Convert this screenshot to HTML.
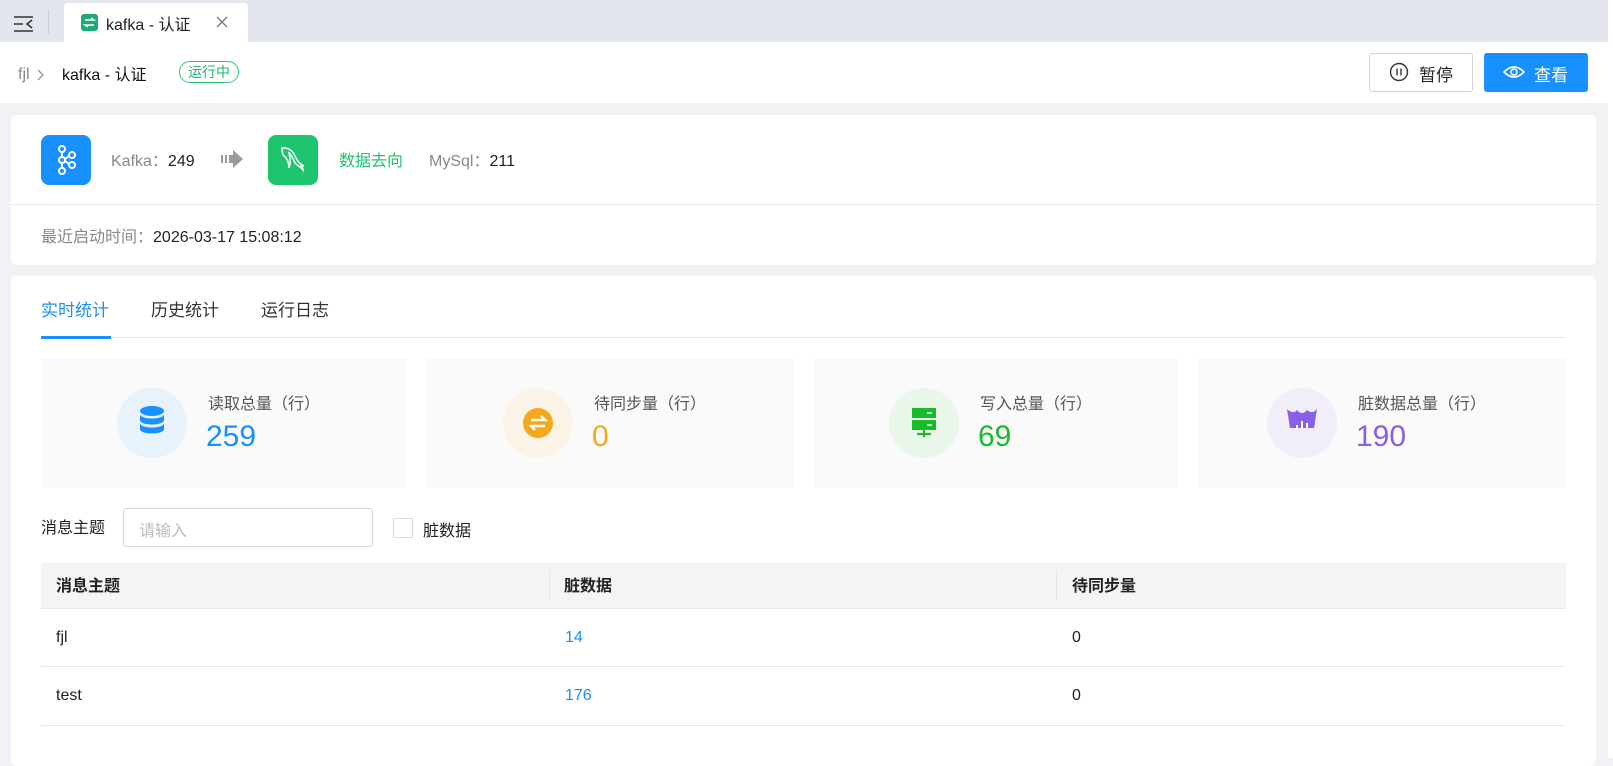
<!DOCTYPE html>
<html><head><meta charset="utf-8"><style>
*{margin:0;padding:0;box-sizing:border-box}
body{width:1613px;height:758px;overflow:hidden;background:#f0f2f5;font-family:"Liberation Sans","Noto Sans CJK SC",sans-serif;color:#222;position:relative;font-size:16px}
.a{position:absolute}
.tabbar{left:0;top:0;width:1608px;height:42px;background:#e3e6ed}
.hdr{left:0;top:42px;width:1608px;height:61px;background:#fff}
.card{background:#fff;border-radius:6px}
.stat{background:#fafafa;width:366px;height:130px;top:358px}
.circ{width:70px;height:70px;border-radius:50%;top:30px}
.lbl{font-size:16px;color:#555;top:32px;white-space:nowrap}
.num{font-size:30px;top:62px}
.th{font-weight:bold;color:#222}
.line{height:1px;background:#e8e8e8;left:41px;width:1525px}
</style></head><body>
<div class="a tabbar"></div>
<svg class="a" style="left:13px;top:15px" width="22" height="18" viewBox="0 0 22 18"><path d="M1 2h19M1 9h9M1 16h19M19 5l-5 4 5 4" stroke="#333" stroke-width="1.6" fill="none"/></svg>
<div class="a" style="left:48px;top:10px;width:1px;height:24px;background:#c8ccd4"></div>
<div class="a" style="left:64px;top:3px;width:184px;height:39px;background:#fff;border-radius:4px 4px 0 0"></div>
<div class="a" style="left:81px;top:14px;width:17px;height:17px;background:#1ea97a;border-radius:3px"></div>
<svg class="a" style="left:83px;top:16px" width="13" height="13" viewBox="0 0 13 13"><path d="M2 4h9l-3-2M11 9H2l3 2" stroke="#fff" stroke-width="1.4" fill="none"/></svg>
<div class="a" style="left:106px;top:11px;font-size:16px;color:#222">kafka - 认证</div>
<svg class="a" style="left:216px;top:16px" width="12" height="12" viewBox="0 0 12 12"><path d="M1 1l10 10M11 1L1 11" stroke="#777" stroke-width="1.3"/></svg>
<div class="a hdr"></div>
<div class="a" style="left:18px;top:66px;color:#888;font-size:16px">fjl</div>
<svg class="a" style="left:37px;top:69px" width="8" height="12" viewBox="0 0 8 12"><path d="M1 1l5 5-5 5" stroke="#999" stroke-width="1.4" fill="none"/></svg>
<div class="a" style="left:62px;top:61px;font-size:16px;color:#111">kafka - 认证</div>
<div class="a" style="left:179px;top:61px;width:60px;height:22px;border:1px solid #2bc47a;border-radius:11px;color:#1fb86a;font-size:14px;line-height:20px;text-align:center">运行中</div>
<div class="a" style="left:1369px;top:53px;width:104px;height:39px;border:1px solid #d4d4d4;border-radius:3px;background:#fff"></div>
<svg class="a" style="left:1389px;top:62px" width="20" height="20" viewBox="0 0 20 20"><circle cx="10" cy="10" r="8.5" stroke="#333" stroke-width="1.4" fill="none"/><path d="M8 6.5v7M12 6.5v7" stroke="#333" stroke-width="1.4"/></svg>
<div class="a" style="left:1419px;top:61px;font-size:17px;color:#222">暂停</div>
<div class="a" style="left:1484px;top:53px;width:104px;height:39px;background:#1890ff;border-radius:3px"></div>
<svg class="a" style="left:1503px;top:63px" width="22" height="18" viewBox="0 0 22 18"><path d="M1 9Q11-1 21 9Q11 19 1 9Z" stroke="#fff" stroke-width="1.6" fill="none"/><circle cx="11" cy="9" r="3" stroke="#fff" stroke-width="1.6" fill="none"/></svg>
<div class="a" style="left:1534px;top:61px;font-size:17px;color:#fff">查看</div>
<div class="a card" style="left:11px;top:115px;width:1585px;height:150px"></div>
<div class="a" style="left:11px;top:204px;width:1585px;height:1px;background:#e8e8e8"></div>
<div class="a" style="left:41px;top:135px;width:50px;height:50px;background:#1890ff;border-radius:8px"></div>
<svg class="a" style="left:54px;top:144px" width="24" height="32" viewBox="0 0 24 32"><g stroke="#fff" stroke-width="2" fill="none"><circle cx="8" cy="5" r="3"/><circle cx="8" cy="16" r="3"/><circle cx="8" cy="27" r="3"/><circle cx="18" cy="11" r="3"/><circle cx="18" cy="21" r="3"/><path d="M8 8v5M8 19v5M11 15l4-3M11 17l4 3"/></g></svg>
<div class="a" style="left:111px;top:147px;color:#888">Kafka：<span style="color:#222">249</span></div>
<svg class="a" style="left:221px;top:149px" width="24" height="20" viewBox="0 0 24 20"><path d="M0 6h2v8H0zM4 6h2v8H4zM8 6h4V1l10 9-10 9v-5H8z" fill="#999"/></svg>
<div class="a" style="left:268px;top:135px;width:50px;height:50px;background:#1ec46e;border-radius:8px"></div>
<svg class="a" style="left:279px;top:145px" width="28" height="30" viewBox="0 0 28 30"><path d="M3 3c6-1 11 3 13 8 2 5 5 8 9 10l-3-1c1 2 2 3 2 5-2-3-5-4-7-6-3-3-3-8-7-11 1 4 2 10 0 15 0-5-2-10-6-13 0 0-1-4-1-7z" stroke="#fff" stroke-width="1.5" fill="none"/></svg>
<div class="a" style="left:339px;top:147px;color:#1ec46e">数据去向</div>
<div class="a" style="left:429px;top:147px;color:#888">MySql：<span style="color:#222">211</span></div>
<div class="a" style="left:41px;top:223px;color:#888">最近启动时间：<span style="color:#222">2026-03-17 15:08:12</span></div>
<div class="a card" style="left:11px;top:276px;width:1585px;height:490px"></div>
<div class="a" style="left:41px;top:296px;font-size:17px;color:#1890ff">实时统计</div>
<div class="a" style="left:151px;top:296px;font-size:17px;color:#333">历史统计</div>
<div class="a" style="left:261px;top:296px;font-size:17px;color:#333">运行日志</div>
<div class="a" style="left:41px;top:337px;width:1525px;height:1px;background:#e8e8e8"></div>
<div class="a" style="left:41px;top:336px;width:70px;height:3px;background:#1890ff"></div>

<div class="a stat" style="left:41px"><div class="a circ" style="left:76px;background:#e8f2fd"></div>
<svg class="a" style="left:99px;top:48px" width="24" height="30" viewBox="0 0 24 30"><ellipse cx="12" cy="5" rx="12" ry="5" fill="#1890ff"/><path d="M0 8c0 6 24 6 24 0v6c0 6-24 6-24 0z M0 17c0 6 24 6 24 0v6c0 6-24 6-24 0z" fill="#1890ff"/></svg>
<div class="a lbl" style="left:167px">读取总量（行）</div><div class="a num" style="left:165px;color:#1890ff">259</div></div>

<div class="a stat" style="left:427px"><div class="a circ" style="left:76px;background:#fbf3e6"></div>
<svg class="a" style="left:96px;top:50px" width="30" height="30" viewBox="0 0 30 30"><circle cx="15" cy="15" r="15" fill="#f6a81c"/><path d="M8 12h14l-4-4M22 18H8l4 4" stroke="#fff" stroke-width="2.4" fill="none"/></svg>
<div class="a lbl" style="left:167px">待同步量（行）</div><div class="a num" style="left:165px;color:#f6a81c">0</div></div>

<div class="a stat" style="left:813px"><div class="a circ" style="left:76px;background:#e9f6ea"></div>
<svg class="a" style="left:99px;top:50px" width="24" height="30" viewBox="0 0 24 30"><rect x="0" y="0" width="24" height="10" fill="#1aba2a"/><rect x="0" y="12" width="24" height="10" fill="#1aba2a"/><path d="M15 5h5M15 17h5" stroke="#fff" stroke-width="1.5"/><path d="M12 22v7M5 26h14" stroke="#1aba2a" stroke-width="2.2"/></svg>
<div class="a lbl" style="left:167px">写入总量（行）</div><div class="a num" style="left:165px;color:#1aba2a">69</div></div>

<div class="a stat" style="left:1199px"><div class="a circ" style="left:68px;background:#f1eef9"></div>
<svg class="a" style="left:88px;top:51px" width="30" height="26" viewBox="0 0 30 26"><path d="M0 0c4 4 8 4 10 1 3 4 7 4 10 0 3 3 7 3 10-1l-3 19H3z" fill="#8a5ee6"/><path d="M10 16v3M15 12v7M20 14v5" stroke="#fff" stroke-width="2"/></svg>
<div class="a lbl" style="left:159px">脏数据总量（行）</div><div class="a num" style="left:157px;color:#8a5ee6">190</div></div>

<div class="a" style="left:41px;top:514px">消息主题</div>
<div class="a" style="left:123px;top:508px;width:250px;height:39px;border:1px solid #d9d9d9;border-radius:3px"></div>
<div class="a" style="left:139px;top:517px;color:#bbb">请输入</div>
<div class="a" style="left:393px;top:518px;width:20px;height:20px;border:1px solid #d9d9d9;border-radius:2px"></div>
<div class="a" style="left:423px;top:517px">脏数据</div>

<div class="a" style="left:41px;top:563px;width:1525px;height:45px;background:#f4f4f5"></div>
<div class="a" style="left:549px;top:571px;width:1px;height:29px;background:#e6e6e6"></div>
<div class="a" style="left:1056px;top:571px;width:1px;height:29px;background:#e6e6e6"></div>
<div class="a th" style="left:56px;top:572px">消息主题</div>
<div class="a th" style="left:564px;top:572px">脏数据</div>
<div class="a th" style="left:1072px;top:572px">待同步量</div>
<div class="a line" style="top:608px"></div>
<div class="a" style="left:56px;top:629px">fjl</div>
<div class="a" style="left:565px;top:629px;color:#1890ff">14</div>
<div class="a" style="left:1072px;top:629px">0</div>
<div class="a line" style="top:666px"></div>
<div class="a" style="left:56px;top:687px">test</div>
<div class="a" style="left:565px;top:687px;color:#1890ff">176</div>
<div class="a" style="left:1072px;top:687px">0</div>
<div class="a line" style="top:725px"></div>
<div class="a" style="left:1608px;top:0;width:5px;height:758px;background:#fff"></div>
</body></html>
